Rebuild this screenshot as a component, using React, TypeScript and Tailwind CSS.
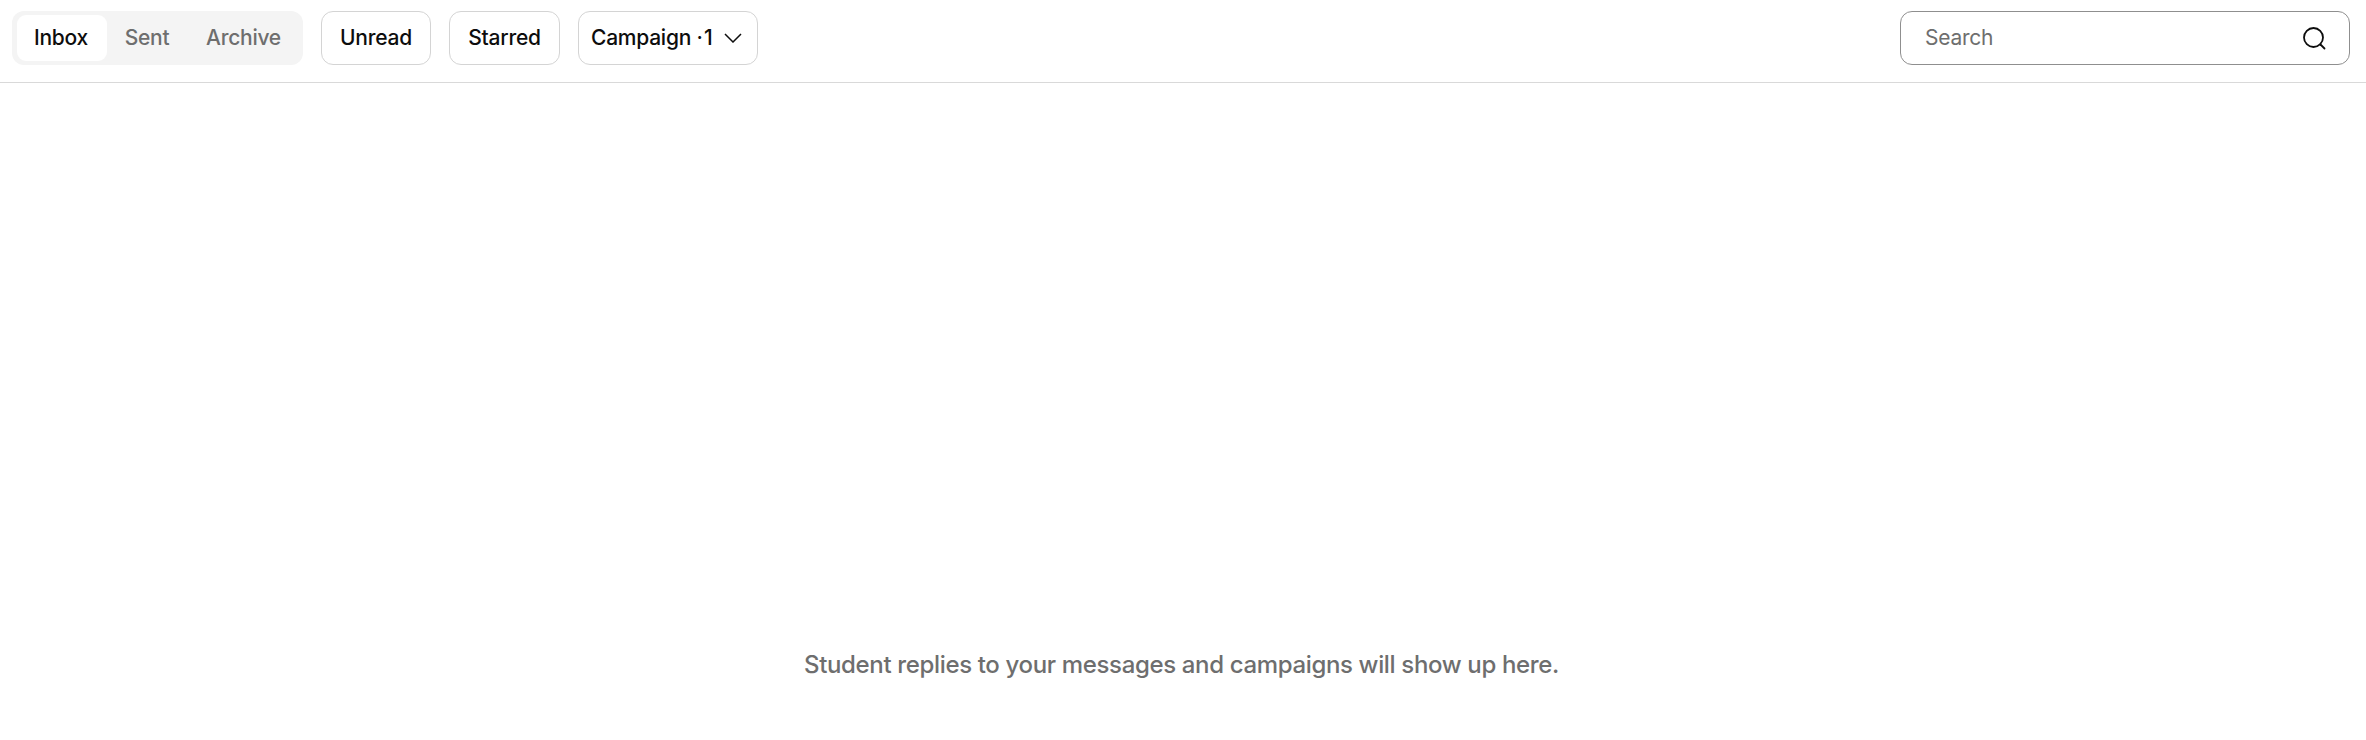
export default function App() {
  return (
    <div className="h-[740px] bg-white flex flex-col font-['Inter','Liberation_Sans',sans-serif] tracking-[-0.25px]">
      <header className="h-[83px] shrink-0 border-b border-[#d9d9d9] flex items-start justify-between pl-3 pr-4 pt-[11px]">
        <div className="flex items-center">
          <div className="h-[54px] w-[291px] rounded-[12px] bg-[#f4f4f4] flex items-center pl-[5px] py-[4px] text-[21px] font-[450] text-[#6e6e6e]">
            <div className="h-[46px] w-[90px] pr-[2px] rounded-[9px] bg-white text-[#0d0d0d] flex items-center justify-center">Inbox</div>
            <div className="w-[80px] flex items-center justify-center">Sent</div>
            <div className="w-[113px] flex items-center justify-center">Archive</div>
          </div>
          <div className="ml-[18px] h-[54px] w-[110px] rounded-[12px] border border-[#d4d4d4] text-[21px] font-[450] text-[#0d0d0d] flex items-center justify-center">Unread</div>
          <div className="ml-[18px] h-[54px] w-[111px] rounded-[12px] border border-[#d4d4d4] text-[21px] font-[450] text-[#0d0d0d] flex items-center justify-center">Starred</div>
          <div className="ml-[18px] h-[54px] w-[180px] rounded-[12px] border border-[#d4d4d4] text-[21px] font-[450] text-[#0d0d0d] flex items-center pl-[12px]">
            <span>Campaign ·{"\u200A"}1</span>
            <svg className="ml-[11px] w-[18px] h-[10px]" viewBox="0 0 18 10" fill="none" stroke="currentColor" strokeWidth="1.5">
              <path d="M1 1l8 8 8-8" />
            </svg>
          </div>
        </div>
        <div className="h-[54px] w-[450px] rounded-[12px] border border-[#8f8f8f] flex items-center justify-between pl-[24px] pr-[23px] text-[21px] text-[#6e6e6e]">
          <span>Search</span>
          <svg className="w-[24px] h-[24px] text-[#0d0d0d]" viewBox="0 0 24 24" fill="none" stroke="currentColor" strokeWidth="1.8" strokeLinecap="round">
            <circle cx="11.5" cy="11.5" r="9.5" />
            <path d="M18.5 18.5l4 4" />
          </svg>
        </div>
      </header>
      <main className="flex-1 flex flex-col items-center">
        <p className="mt-[564px] ml-[-3px] text-[24px] tracking-[-0.35px] font-[450] text-[#6e6e6e]">Student replies to your messages and campaigns will show up here.</p>
      </main>
    </div>
  );
}
